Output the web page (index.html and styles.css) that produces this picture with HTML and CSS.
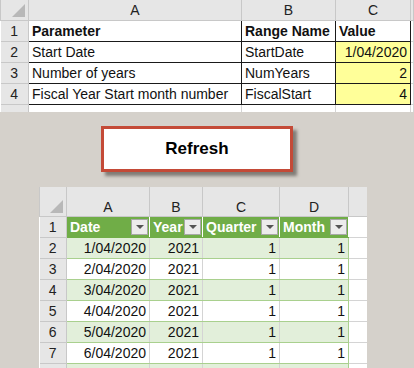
FILE: index.html
```html
<!DOCTYPE html>
<html lang="en">
<head>
  <meta charset="UTF-8">
  <title>Fiscal calendar parameters</title>
  <link rel="stylesheet" href="styles.css">
</head>
<body>

  <div class="sheet top-sheet">
    <table class="grid params">
      <colgroup>
        <col style="width:28px"><col style="width:213px"><col style="width:94px"><col style="width:75px"><col>
      </colgroup>
      <tr class="col-head">
        <td class="corner"><span class="tri"></span></td>
        <td>A</td><td>B</td><td>C</td><td></td>
      </tr>
      <tr>
        <td class="row-head">1</td>
        <td class="cell b">Parameter</td>
        <td class="cell b">Range Name</td>
        <td class="cell b">Value</td>
        <td class="blank"></td>
      </tr>
      <tr>
        <td class="row-head">2</td>
        <td class="cell">Start Date</td>
        <td class="cell">StartDate</td>
        <td class="cell input num">1/04/2020</td>
        <td class="blank"></td>
      </tr>
      <tr>
        <td class="row-head">3</td>
        <td class="cell">Number of years</td>
        <td class="cell">NumYears</td>
        <td class="cell input num">2</td>
        <td class="blank"></td>
      </tr>
      <tr>
        <td class="row-head">4</td>
        <td class="cell">Fiscal Year Start month number</td>
        <td class="cell">FiscalStart</td>
        <td class="cell input num">4</td>
        <td class="blank"></td>
      </tr>
      <tr>
        <td class="row-head"></td>
        <td class="blank"></td><td class="blank"></td><td class="blank"></td><td class="blank"></td>
      </tr>
    </table>
  </div>

  <button class="refresh-button">Refresh</button>

  <div class="sheet bottom-sheet">
    <table class="grid dates">
      <colgroup>
        <col style="width:27px"><col style="width:83px"><col style="width:53px"><col style="width:77px"><col style="width:69px"><col style="width:19px">
      </colgroup>
      <tr class="col-head tall">
        <td class="corner"><span class="tri"></span></td>
        <td>A</td><td>B</td><td>C</td><td>D</td><td></td>
      </tr>
      <tr class="tbl-head">
        <td class="row-head">1</td>
        <td>Date<span class="filter"></span></td>
        <td>Year<span class="filter"></span></td>
        <td>Quarter<span class="filter"></span></td>
        <td class="last">Month<span class="filter"></span></td>
        <td class="blank"></td>
      </tr>
      <tr class="band">
        <td class="row-head">2</td>
        <td class="num">1/04/2020</td><td class="num">2021</td><td class="num">1</td><td class="num last">1</td><td class="blank"></td>
      </tr>
      <tr>
        <td class="row-head">3</td>
        <td class="num">2/04/2020</td><td class="num">2021</td><td class="num">1</td><td class="num last">1</td><td class="blank"></td>
      </tr>
      <tr class="band">
        <td class="row-head">4</td>
        <td class="num">3/04/2020</td><td class="num">2021</td><td class="num">1</td><td class="num last">1</td><td class="blank"></td>
      </tr>
      <tr>
        <td class="row-head">5</td>
        <td class="num">4/04/2020</td><td class="num">2021</td><td class="num">1</td><td class="num last">1</td><td class="blank"></td>
      </tr>
      <tr class="band">
        <td class="row-head">6</td>
        <td class="num">5/04/2020</td><td class="num">2021</td><td class="num">1</td><td class="num last">1</td><td class="blank"></td>
      </tr>
      <tr>
        <td class="row-head">7</td>
        <td class="num">6/04/2020</td><td class="num">2021</td><td class="num">1</td><td class="num last">1</td><td class="blank"></td>
      </tr>
      <tr class="band">
        <td class="row-head"></td>
        <td></td><td></td><td></td><td class="last"></td><td class="blank"></td>
      </tr>
    </table>
  </div>

</body>
</html>
```

FILE: styles.css
```css
/* spreadsheet look */
body {
  margin: 0;
  background: #d5d1cb;
  font-family: 'Liberation Sans', Arial, sans-serif;
  font-size: 14px;
  color: #111;
  overflow: hidden;
}

.sheet {
  overflow: hidden;
  background: #fff;
}

.top-sheet {
  width: 414px;
  height: 112px;
}

.grid {
  border-collapse: collapse;
  table-layout: fixed;
}

.params {
  width: 414px;
}

.grid td {
  padding: 0 3px;
  height: 20px;
  white-space: nowrap;
  overflow: hidden;
  border: 1px solid #d4d4d4;
  line-height: 20px;
}

.col-head td {
  background: #e6e6e6;
  text-align: center;
  color: #222;
  border-color: #c8c8c8;
  height: 19px;
  border-top: none;
}

.row-head {
  background: #e6e6e6;
  text-align: center;
  color: #222;
  border-color: #c8c8c8 !important;
  border-left: none !important;
}

.corner {
  position: relative;
}

.tri {
  position: absolute;
  right: 3px;
  bottom: 3px;
  width: 0;
  height: 0;
  border-left: 13px solid transparent;
  border-bottom: 13px solid #b8b8b8;
}

.params .cell {
  border: 1px solid #1a1a1a;
}

.b {
  font-weight: bold;
}

.num {
  text-align: right;
}

.input {
  background: #ffff99;
}

/* refresh button */
.refresh-button {
  display: block;
  margin: 14px 0 0 101px;
  width: 192px;
  height: 46px;
  background: #fff;
  border: 3px solid #c44a37;
  box-shadow: 4px 4px 3px rgba(60, 55, 50, 0.55);
  font-family: 'Liberation Sans', Arial, sans-serif;
  font-weight: bold;
  font-size: 17px;
  color: #000;
}

/* date table */
.bottom-sheet {
  margin: 15px 0 0 39px;
  width: 328px;
}

.dates {
  width: 328px;
}

.col-head.tall td {
  height: 29px;
  vertical-align: bottom;
  line-height: 18px;
}

.dates td {
  height: 20px;
}

.tbl-head td:not(.row-head):not(.blank) {
  background: #70ad47;
  color: #fff;
  font-weight: bold;
  position: relative;
  border-color: #70ad47;
  border-right-color: #fff;
}

.filter {
  position: absolute;
  right: 1px;
  top: 2px;
  width: 15px;
  height: 14px;
  background: #ececec;
  border: 1px solid #a8a8a8;
}

.filter::after {
  content: "";
  position: absolute;
  left: 4px;
  top: 5px;
  border-left: 4px solid transparent;
  border-right: 4px solid transparent;
  border-top: 4px solid #555;
}

.dates tr:not(.col-head):not(.tbl-head) td:not(.row-head):not(.blank) {
  border-top-color: #a9d08e;
  border-bottom-color: #a9d08e;
}

.band td:not(.row-head):not(.blank) {
  background: #e2efda;
}

.dates td.last {
  border-right-color: #a9d08e;
}
```
